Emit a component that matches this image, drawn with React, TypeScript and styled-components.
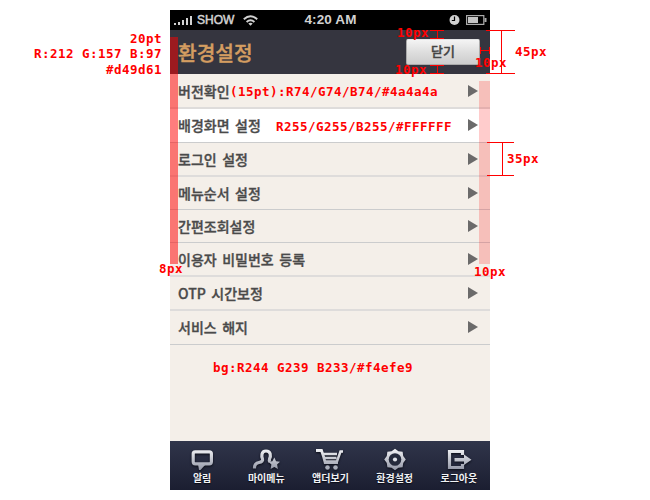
import React from "react";
import styled, { createGlobalStyle } from "styled-components";

const Global = createGlobalStyle`
  * { box-sizing: border-box; }
  body { margin: 0; background: #fff; }
`;

const Page = styled.div`
  position: relative;
  width: 650px;
  height: 500px;
  padding: 10px 0 0 170px;
  overflow: hidden;
  background: #fff;
  font-family: "Noto Sans CJK KR", sans-serif;
`;
const Phone = styled.main`
  width: 320px;
  height: 480px;
  display: flex;
  flex-direction: column;
  background: #f4efe9;
`;
const StatusBar = styled.div`
  height: 20px;
  flex: none;
  display: grid;
  grid-template-columns: 1fr auto 1fr;
  align-items: center;
  background: #000;
  color: #d2d2d2;
  font: bold 13.5px/20px "Liberation Sans", sans-serif;
`;
const StatusLeft = styled.div`
  display: flex;
  align-items: center;
  padding-left: 4px;
  gap: 4px;
  font-size: 12px;
  font-weight: 400;
  -webkit-text-stroke: 0.5px #d2d2d2;
  svg:last-child { margin-left: 5px; }
`;
const StatusRight = styled.div`
  display: flex;
  align-items: center;
  justify-content: flex-end;
  gap: 6px;
  padding-right: 3px;
`;
const Clock = styled.span`
  font-size: 13.5px;
  letter-spacing: 0.1px;
  padding-left: 1px;
`;
const Header = styled.header`
  height: 44px;
  flex: none;
  display: flex;
  align-items: flex-start;
  justify-content: space-between;
  padding: 9px 10px 0 8px;
  background: #35353f;
`;
const Title = styled.h1`
  margin: 0;
  font-size: 20.3px;
  line-height: 26px;
  font-weight: 500;
  -webkit-text-stroke: 0.4px #d49d61;
  color: #d49d61;
`;
const CloseButton = styled.button`
  width: 74px;
  height: 26px;
  padding: 0 0 2px;
  border: 1px solid #aaa;
  border-top-color: #e2e2e4;
  border-radius: 2px;
  background: linear-gradient(#f4f4f4, #dcdcdc 55%, #cdcdcd);
  font: 500 13px/20px "Noto Sans CJK KR", sans-serif;
  -webkit-text-stroke: 0.35px #444;
  color: #444;
`;
const Menu = styled.ul`
  list-style: none;
  margin: 0;
  padding: 0;
  flex: 1;
`;
const MenuRow = styled.li<{ $h: number; $active?: boolean; $soft?: boolean }>`
  height: ${(p) => p.$h}px;
  display: flex;
  align-items: center;
  justify-content: space-between;
  padding: 0 12px ${(p) => (p.$h === 34 && !p.$soft ? 2 : 0)}px 8px;
  background: ${(p) => (p.$active ? "#fff" : "#f4efe9")};
  border-bottom: ${(p) => (p.$soft ? "2px solid #dedcdb" : "1px solid #cbcccd")};
  font-size: 14px;
  line-height: 20px;
  font-weight: 500;
  word-spacing: 2.4px;
  -webkit-text-stroke: 0.35px #4a4a4a;
  color: #4a4a4a;
`;
const Arrow = styled.svg`
  width: 10px;
  height: 12px;
  flex: none;
  fill: #6b6a6a;
`;
const TabBar = styled.nav`
  height: 49px;
  flex: none;
  display: grid;
  grid-template-columns: repeat(5, 64.2px);
  background: linear-gradient(#30354a, #1b1e31);
  overflow: hidden;
`;
const Tab = styled.div`
  display: flex;
  flex-direction: column;
  align-items: center;
  padding-top: 6px;
  font-size: 10px;
  line-height: 14px;
  font-weight: 700;
  color: #f1f2f5;
  text-shadow: 0 1px 1px #080a14;
  white-space: nowrap;
  svg {
    width: 28px;
    height: 24px;
    flex: none;
    filter: drop-shadow(0 1px 1px #080a14);
  }
`;
const Note = styled.span<{ $x: number; $y: number }>`
  position: absolute;
  left: ${(p) => p.$x}px;
  top: ${(p) => p.$y}px;
  font: bold 12.5px/14px "DejaVu Sans Mono", monospace;
  letter-spacing: 0.475px;
  white-space: pre;
  color: #f00;
`;
const Margin = styled.div<{ $x: number; $y: number; $w: number; $alpha: number }>`
  position: absolute;
  left: ${(p) => p.$x}px;
  top: ${(p) => p.$y}px;
  width: ${(p) => p.$w}px;
  height: ${(p) => 264 - p.$y}px;
  background: rgba(255, 0, 0, ${(p) => p.$alpha});
`;
const Rules = styled.svg`
  position: absolute;
  inset: 0;
  pointer-events: none;
`;

const rows = [
  { label: "버전확인", h: 35, soft: true },
  { label: "배경화면 설정", h: 34, active: true },
  { label: "로그인 설정", h: 34, soft: true },
  { label: "메뉴순서 설정", h: 33 },
  { label: "간편조회설정", h: 33 },
  { label: "이용자 비밀번호 등록", h: 34, soft: true },
  { label: "OTP 시간보정", h: 34, soft: true },
  { label: "서비스 해지", h: 34 },
];

const notes: [string, number, number][] = [
  ["20pt", 130, 32],
  ["R:212 G:157 B:97", 34, 47],
  ["#d49d61", 106, 63],
  ["10px", 397, 26],
  ["10px", 395, 63],
  ["10px", 475, 56],
  ["45px", 515, 45],
  ["(15pt):R74/G74/B74/#4a4a4a", 230, 85],
  ["R255/G255/B255/#FFFFFF", 276, 120],
  ["35px", 507, 152],
  ["8px", 159, 262],
  ["10px", 474, 265],
  ["bg:R244 G239 B233/#f4efe9", 213, 361],
];

const stroke = { fill: "none", stroke: "url(#metal)", strokeWidth: 3.2 } as const;

// Eight-pointed cog: 16 vertices alternating between two radii.
const cog = Array.from({ length: 16 }, (_, i) => {
  const r = i % 2 === 0 ? 10.8 : 8.9;
  const a = (i * Math.PI) / 8;
  return `${(14 + r * Math.sin(a)).toFixed(2)},${(12.5 - r * Math.cos(a)).toFixed(2)}`;
}).join(" ");

const tabs = [
  {
    label: "알림",
    icon: (
      <>
        <rect x="5.200" y="4.800" width="18.200" height="12" rx="2" {...stroke} />
        <path d="M10 17h8l-5.500 6H11z" fill="url(#metal)" />
      </>
    ),
  },
  {
    label: "마이메뉴",
    icon: (
      <>
        <path
          d="M2.500 21.500v-1c0-3 2-4.500 4.500-5 3-.6 4-2 3.500-3.500C9.500 9.500 9 4 14 4s5 5 3.500 8c-.5 1.200-.3 2 .5 3"
          {...stroke}
        />
        <path d="M22.300 10.500l1.800 3.700 4 .5-3 2.900.8 4.400-3.600-2.100-3.700 2.100.8-4.400-3-2.900 4-.5z" fill="url(#metal)" />
      </>
    ),
  },
  {
    label: "앱더보기",
    icon: (
      <>
        <path d="M0 3.500h5.500c1.500 4 2.800 8.500 3.600 12H22" {...stroke} strokeWidth="2.800" />
        <path d="M7 7h14M8.500 11h12M27 4.500h-2.500L21 14.500H9" {...stroke} strokeWidth="2.500" />
        <circle cx="11.500" cy="20.500" r="2.300" fill="#a9adba" />
        <circle cx="19.500" cy="20.500" r="2.300" fill="#a9adba" />
      </>
    ),
  },
  {
    label: "환경설정",
    icon: (
      <>
        <polygon points={cog} fill="url(#metal)" />
        <circle cx="14" cy="12.500" r="6.300" fill="#252a3c" />
        <circle cx="14" cy="12.500" r="2.100" fill="#dfe2e8" />
      </>
    ),
  },
  {
    label: "로그아웃",
    icon: (
      <>
        <path d="M17.500 8V4.500H4.500v16h13V17" {...stroke} />
        <path d="M9.500 11H19V7.500l7.500 5.200-7.500 5.200V14.500H9.500z" fill="url(#metal)" />
      </>
    ),
  },
];

export default function App() {
  return (
    <Page>
      <Global />
      <Phone>
        <StatusBar>
          <StatusLeft>
            <svg width="19" height="11" fill="#d2d2d2">
              <path d="M0 8h2v2H0zM4 7h2v3H4zM8 5h2v5H8zM12 3h2v7h-2zM16 1h2v9h-2z" />
            </svg>
            <span>SHOW</span>
            <svg width="15" height="11" fill="none" stroke="#d2d2d2" strokeWidth="2">
              <path d="M.8 4.200Q7.500-1.600 14.200 4.200M3.600 7Q7.500 3.600 11.400 7" />
              <path d="M5.300 8.500Q7.500 6.800 9.700 8.500L7.500 10.800z" fill="#d2d2d2" stroke="none" />
            </svg>
          </StatusLeft>
          <Clock>4:20 AM</Clock>
          <StatusRight>
            <svg width="11" height="12">
              <circle cx="5.500" cy="6" r="5" fill="#cfcfcf" />
              <path d="M5.500 2.500V6.500H2.800" fill="none" stroke="#000" strokeWidth="1.200" />
            </svg>
            <svg width="21" height="10">
              <rect x=".6" y=".6" width="17.200" height="8.800" fill="none" stroke="#aaa" strokeWidth="1.200" />
              <path d="M2 2h10v6H2z" fill="#c4c4c4" />
              <path d="M18.500 3h2v4h-2z" fill="#aaa" />
            </svg>
          </StatusRight>
        </StatusBar>
        <Header>
          <Title>환경설정</Title>
          <CloseButton>닫기</CloseButton>
        </Header>
        <Menu>
          {rows.map((r) => (
            <MenuRow key={r.label} $h={r.h} $active={r.active} $soft={r.soft}>
              <span>{r.label}</span>
              <Arrow viewBox="0 0 10 12">
                <path d="M0 0l10 6-10 6z" />
              </Arrow>
            </MenuRow>
          ))}
        </Menu>
        <TabBar>
          {tabs.map((t) => (
            <Tab key={t.label}>
              <svg viewBox="0 0 28 24">
                <defs>
                  <linearGradient id="metal" gradientUnits="userSpaceOnUse" x1="0" y1="2" x2="0" y2="23">
                    <stop offset="0" stopColor="#f2f3f6" />
                    <stop offset="1" stopColor="#9296a6" />
                  </linearGradient>
                </defs>
                {t.icon}
              </svg>
              {t.label}
            </Tab>
          ))}
        </TabBar>
      </Phone>
      <Margin $x={170} $y={37} $w={8} $alpha={0.51} />
      <Margin $x={479} $y={81} $w={11} $alpha={0.2} />
      <Rules width="650" height="500" stroke="#f00" fill="none" shapeRendering="crispEdges">
        <path d="M486 30.500h29M486 73.500h29M501.500 30v44" />
        <path d="M430 30.500h14M430 38.500h14M437.500 30v9M430 65.500h14M430 73.500h14M437.500 65v9" />
        <path d="M480 50.500h10M480.500 47v7M489.500 47v7" />
        <path d="M487 142.500h27M487 175.500h27M502.500 142v34" />
      </Rules>
      {notes.map(([text, x, y]) => (
        <Note key={`${x}-${y}`} $x={x} $y={y}>
          {text}
        </Note>
      ))}
    </Page>
  );
}
